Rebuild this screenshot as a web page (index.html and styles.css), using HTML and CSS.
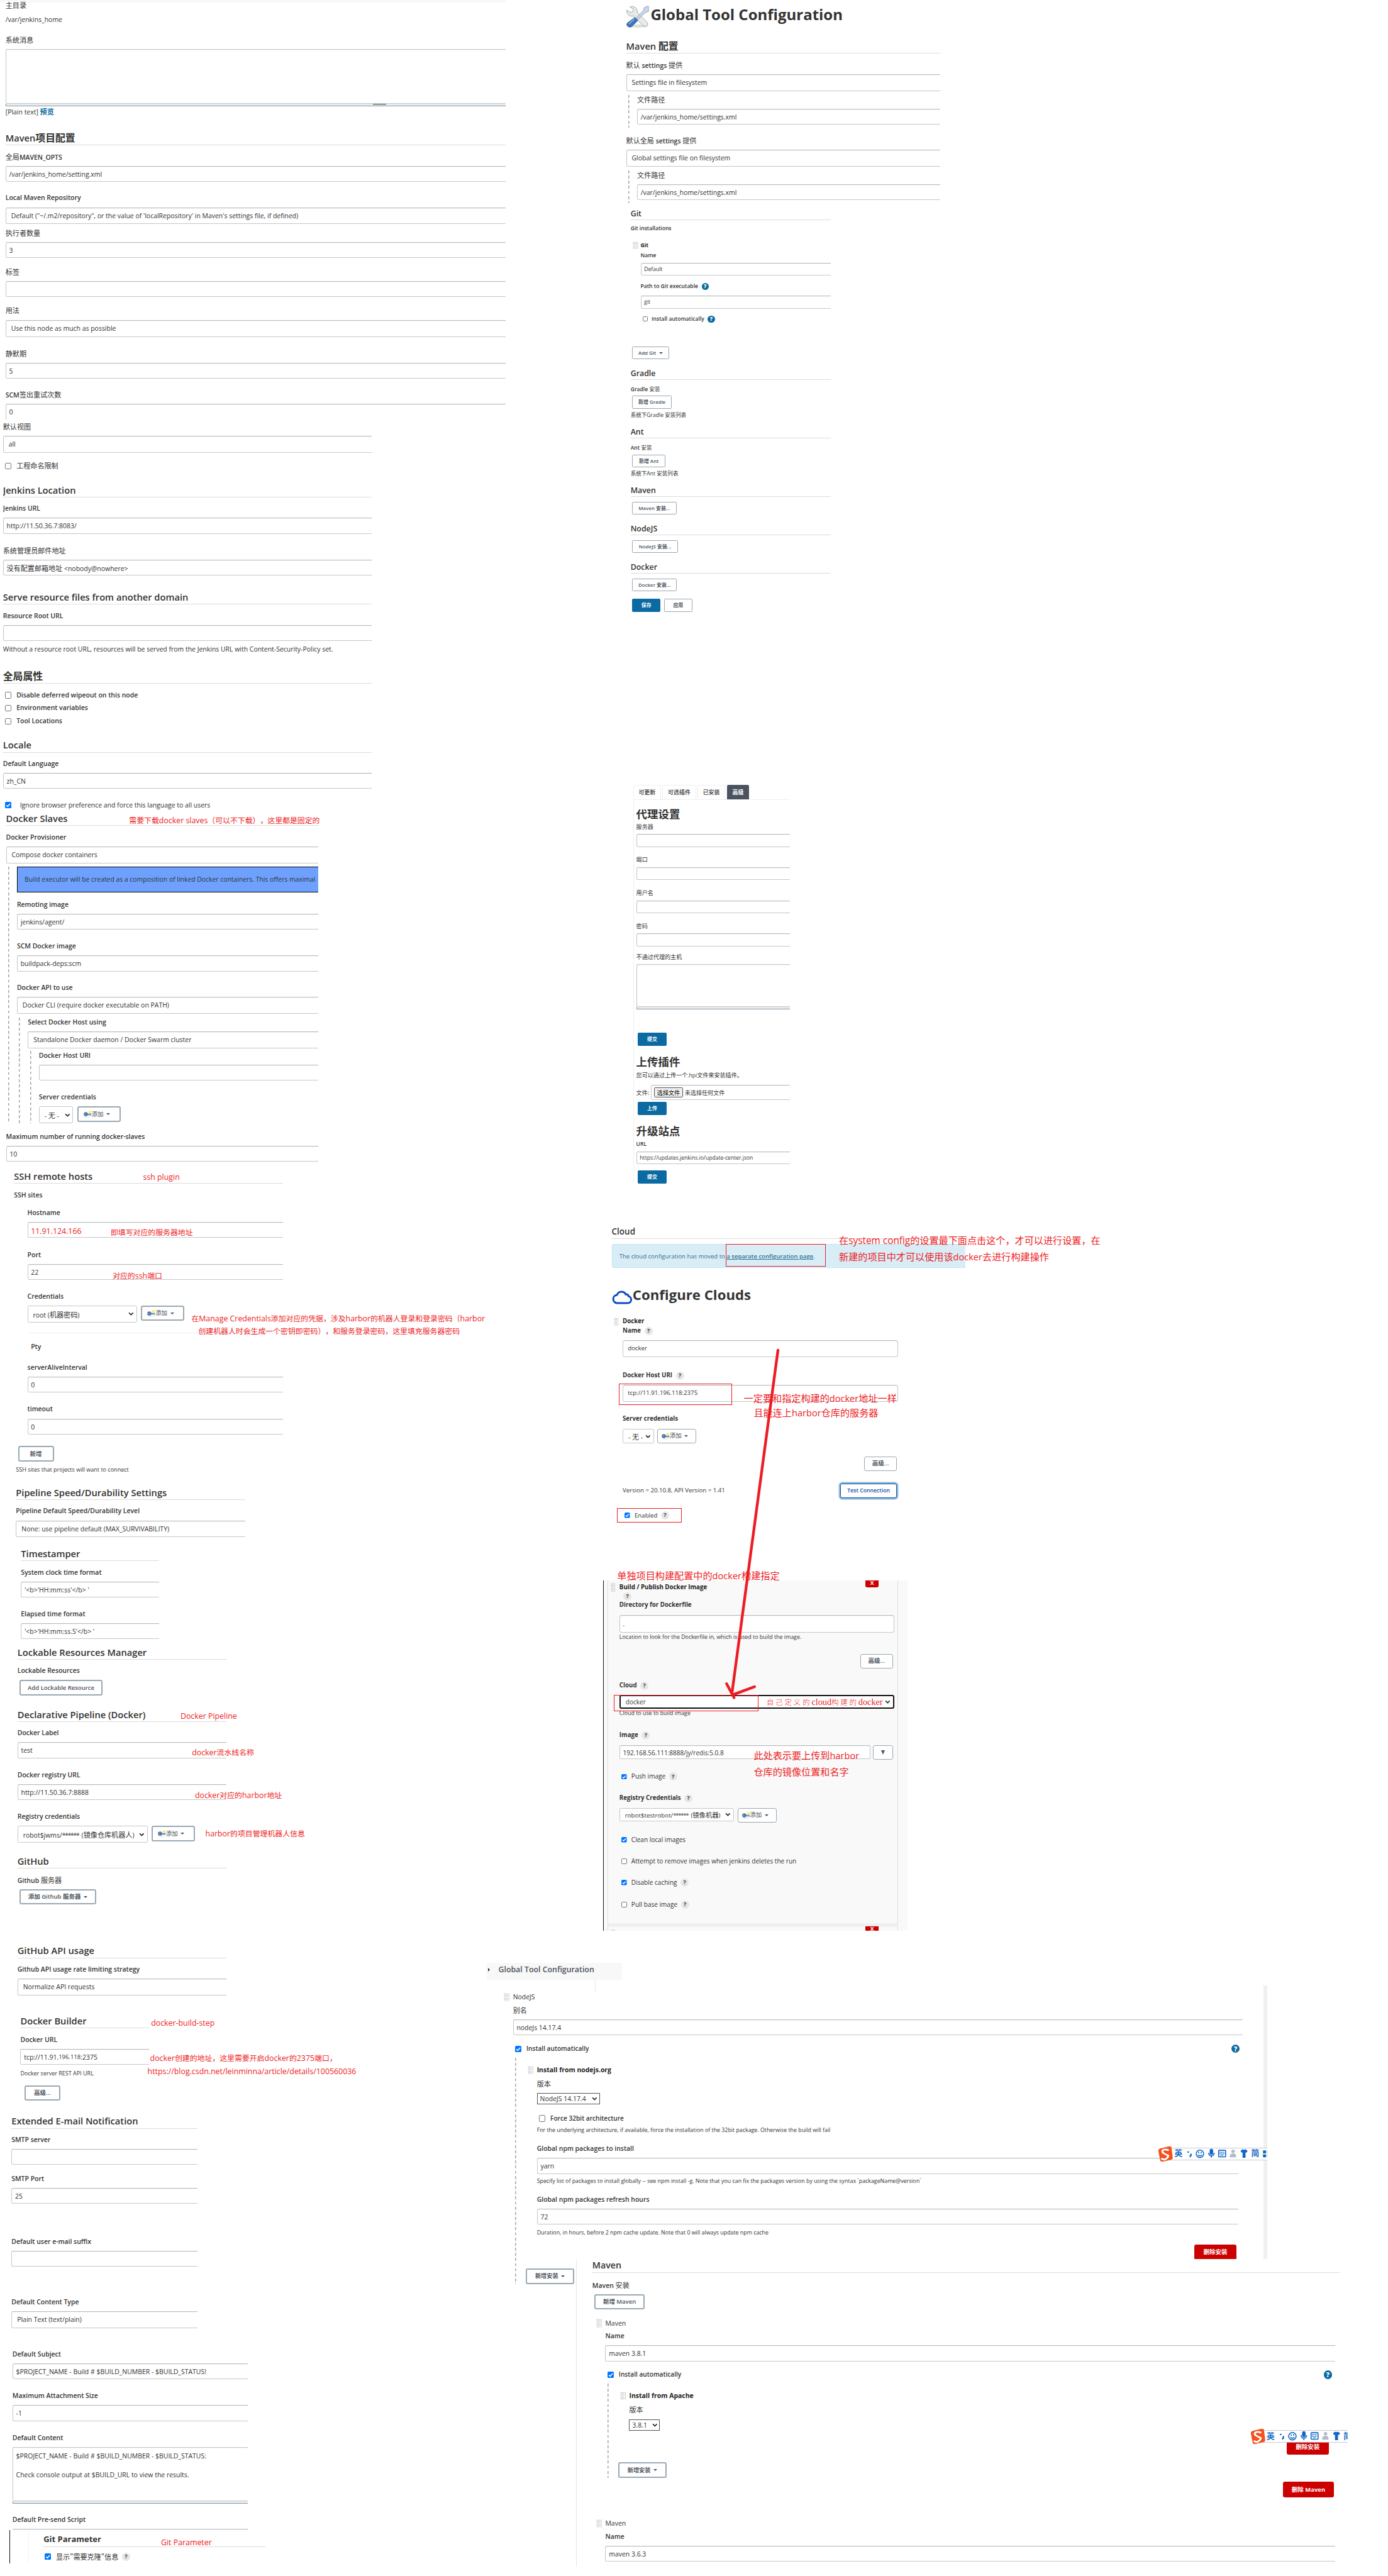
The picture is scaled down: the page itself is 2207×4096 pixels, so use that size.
FILE: index.html
```html
<!DOCTYPE html>
<html lang="zh-CN">
<head>
<meta charset="utf-8">
<title>Jenkins 配置</title>
<link rel="stylesheet" href="styles.css">
</head>
<body>
<svg class="defs" width="0" height="0">
  <symbol id="key" viewBox="0 0 16 14">
    <ellipse cx="8" cy="12.6" rx="6" ry="1" fill="#e4e4e4"/>
    <path d="M7 6.2h8.4v2.6H14l-.8 1-1-1H7z" fill="#7ba0cf" stroke="#3c6395" stroke-width=".5"/>
    <circle cx="4.3" cy="7" r="3.9" fill="#4d7ab3" stroke="#345a8c" stroke-width=".5"/>
    <circle cx="2.8" cy="7" r="1" fill="#a9c2e2"/>
    <circle cx="12.3" cy="3" r="2.7" fill="#f8ee55"/>
  </symbol>
  <symbol id="chev" viewBox="0 0 12 8"><path d="M1.5 1.5 6 6l4.5-4.5" fill="none" stroke="#222" stroke-width="2.2"/></symbol>
  <symbol id="check" viewBox="0 0 14 14"><rect width="14" height="14" rx="2" fill="#0075ff"/><path d="M3 7.3 5.8 10 11 4" fill="none" stroke="#fff" stroke-width="2"/></symbol>
  <symbol id="ime" viewBox="0 0 380 32">
    <path d="M20 5H380V28H20z" fill="#fff"/>
    <path d="M20 4.500H380M20 28.500H380" stroke="#b9bcc2"/>
    <path d="M6 5 23 1q4 0 4.500 3L30 24q0 3-4 4L9 32q-4 0-4.500-4L1 10q0-4 5-5z" fill="#f4511e"/>
    <path d="M22 9q-9-3-12 0t2 6 8 4-2 6-11 0" fill="none" stroke="#fff" stroke-width="3.600"/>
    <g fill="none" stroke="#1368c4" stroke-width="2">
      <path d="M61 11v3M66 16q2 3-2 6" stroke-width="3"/>
      <circle cx="84.500" cy="16" r="7.500"/><path d="M82 12v3M87 12v3M80.500 18q4 4 8 0"/>
      <rect x="105" y="7" width="5" height="10" rx="2.500" fill="#1368c4"/><path d="M102 14q0 6 5.500 6t5.500-6M107.500 20v4"/>
      <rect x="122" y="9" width="14" height="13" rx="1"/><path d="M124 13h10M124 16h10M126 19h6" stroke-dasharray="2 1"/>
    </g>
    <g fill="#b3bcc9"><circle cx="151" cy="11" r="3.500"/><path d="M144 23q0-8 7-8 5 0 6 4v4z"/></g>
    <path d="M166 10l4-3q3 2 6 0l4 3-2 4-2-1v11h-6V13l-2 1z" fill="#1368c4"/>
    <path d="M211 9h6v6h-6zM219 9h6v6h-6zM211 17h6v6h-6zM219 17h6v6h-6z" fill="#1368c4"/>
  </symbol>
</svg>

<main class="canvas">

<section class="panel p-system">
  <div class="lb m1 tight"><span class="z">主目录</span></div>
  <div class="tx m9">/var/jenkins_home</div>
  <div class="lb m21"><span class="z">系统消息</span></div>
  <div class="area a109"></div><div class="resize"><i></i></div>
  <div class="tx m1">[Plain text] <a class="z link">预览</a></div>
  <h2 class="m30">Maven<span class="z">项目配置</span></h2>
  <div class="lb m13"><span class="z">全局</span>MAVEN_OPTS</div>
  <div class="in">/var/jenkins_home/setting.xml</div>
  <div class="lb m23">Local Maven Repository</div>
  <div class="in se">Default ("~/.m2/repository", or the value of 'localRepository' in Maven's settings file, if defined)</div>
  <div class="lb m8"><span class="z">执行者数量</span></div>
  <div class="in">3</div>
  <div class="lb m18"><span class="z">标签</span></div>
  <div class="in"></div>
  <div class="lb m18"><span class="z">用法</span></div>
  <div class="in se">Use this node as much as possible</div>
  <div class="lb m24"><span class="z">静默期</span></div>
  <div class="in">5</div>
  <div class="lb m23">SCM<span class="z">签出重试次数</span></div>
  <div class="in">0</div>
</section>

<section class="panel p-view">
  <div class="lb m2"><span class="z">默认视图</span></div>
  <div class="in se">all</div>
  <div class="ck m17"><i class="box"></i><span class="z">工程命名限制</span></div>
  <h2 class="m25">Jenkins Location</h2>
  <div class="lb m13">Jenkins URL</div>
  <div class="in">http://11.50.36.7:8083/</div>
  <div class="lb m24"><span class="z">系统管理员邮件地址</span></div>
  <div class="in"><span class="z">没有配置邮箱地址</span>&nbsp;&lt;nobody@nowhere&gt;</div>
  <h2 class="m30">Serve resource files from another domain</h2>
  <div class="lb m13">Resource Root URL</div>
  <div class="in"></div>
  <div class="tx m8">Without a resource root URL, resources will be served from the Jenkins URL with Content-Security-Policy set.</div>
  <h2 class="m30"><span class="z">全局属性</span></h2>
  <div class="ck b m13"><i class="box"></i>Disable deferred wipeout on this node</div>
  <div class="ck b m6"><i class="box"></i>Environment variables</div>
  <div class="ck b m6"><i class="box"></i>Tool Locations</div>
  <h2 class="m25">Locale</h2>
  <div class="lb m13">Default Language</div>
  <div class="in">zh_CN</div>
  <div class="ck wide m23"><svg class="box on"><use href="#check"/></svg>Ignore browser preference and force this language to all users</div>
</section>

<section class="panel p-slaves">
  <h2 class="m1">Docker Slaves</h2>
  <div class="lb m13">Docker Provisioner</div>
  <div class="in se">Compose docker containers</div>
  <div class="nest m7">
    <div class="info">Build executor will be created as a composition of linked Docker containers. This offers maximal</div>
    <div class="lb m15">Remoting image</div>
    <div class="in">jenkins/agent/</div>
    <div class="lb m24">SCM Docker image</div>
    <div class="in">buildpack-deps:scm</div>
    <div class="lb m23">Docker API to use</div>
    <div class="in se">Docker CLI (require docker executable on PATH)</div>
    <div class="nest m7">
      <div class="lb m1">Select Docker Host using</div>
      <div class="in se">Standalone Docker daemon / Docker Swarm cluster</div>
      <div class="nest m5">
        <div class="lb m2">Docker Host URI</div>
        <div class="in"></div>
        <div class="lb m24">Server credentials</div>
        <div class="row"><div class="sel w69">- <span class="z">无</span> -<svg class="chev"><use href="#chev"/></svg></div><div class="btn add"><svg class="key"><use href="#key"/></svg><span>添加</span><i class="car"></i></div></div>
      </div>
    </div>
  </div>
  <div class="lb m17">Maximum number of running docker-slaves</div>
  <div class="in">10</div>
</section>

<section class="panel p-ssh">
  <h2 class="m6">SSH remote hosts</h2>
  <div class="lb tight m14">SSH sites</div>
  <div class="indent">
    <div class="lb m15">Hostname</div>
    <div class="in"></div>
    <div class="lb m25">Port</div>
    <div class="in">22</div>
    <div class="lb m23">Credentials</div>
    <div class="row"><div class="sel w220">root (<span class="z">机器密码</span>)<svg class="chev"><use href="#chev"/></svg></div><div class="btn add"><svg class="key"><use href="#key"/></svg><span>添加</span><i class="car"></i></div></div>
    <div class="rule m20"></div>
    <div class="lb tight pty m19">Pty</div>
    <div class="lb m21">serverAliveInterval</div>
    <div class="in">0</div>
    <div class="lb m24">timeout</div>
    <div class="in">0</div>
  </div>
  <div class="btn ml8 w72 m23">新增</div>
  <div class="tx small ml4 m6">SSH sites that projects will want to connect</div>
</section>

<section class="panel p-speed">
  <h2 class="m1">Pipeline Speed/Durability Settings</h2>
  <div class="lb m13">Pipeline Default Speed/Durability Level</div>
  <div class="in se">None: use pipeline default (MAX_SURVIVABILITY)</div>
</section>

<section class="panel p-time">
  <h2 class="m2">Timestamper</h2>
  <div class="lb m14">System clock time format</div>
  <div class="in">'&lt;b&gt;'HH:mm:ss'&lt;/b&gt; '</div>
  <div class="lb m23">Elapsed time format</div>
  <div class="in">'&lt;b&gt;'HH:mm:ss.S'&lt;/b&gt; '</div>
</section>

<section class="panel p-lock">
  <h2 class="m1">Lockable Resources Manager</h2>
  <div class="lb m13">Lockable Resources</div>
  <div class="btn ml4 w167">Add Lockable Resource</div>
  <h2 class="m25">Declarative Pipeline (Docker)</h2>
  <div class="lb m13">Docker Label</div>
  <div class="in">test</div>
  <div class="lb m24">Docker registry URL</div>
  <div class="in">http://11.50.36.7:8888</div>
  <div class="lb m24">Registry credentials</div>
  <div class="row"><div class="sel w261">robot$jwms/<span class="st">******</span> (<span class="z">镜像仓库机器人</span>)<svg class="chev"><use href="#chev"/></svg></div><div class="btn add"><svg class="key"><use href="#key"/></svg><span>添加</span><i class="car"></i></div></div>
  <h2 class="m24">GitHub</h2>
  <div class="lb m13">Github <span class="z">服务器</span></div>
  <div class="btn ml4 w154">添加 Github 服务器<i class="car"></i></div>
</section>

<section class="panel p-api">
  <h2 class="m10">GitHub API usage</h2>
  <div class="lb m13">Github API usage rate limiting strategy</div>
  <div class="in se">Normalize API requests</div>
</section>

<section class="panel p-builder">
  <h2 class="m6">Docker Builder</h2>
  <div class="lb m13">Docker URL</div>
  <div class="in">tcp://11.91.<span class="worn">196.118</span>:2375</div>
  <div class="tx small m7">Docker server REST API URL</div>
  <div class="btn ml8 w72 m14">高级...</div>
</section>

<section class="panel p-mail">
  <h2 class="m2">Extended E-mail Notification</h2>
  <div class="lb m13">SMTP server</div>
  <div class="in"></div>
  <div class="lb m18">SMTP Port</div>
  <div class="in">25</div>
  <div class="lb m66">Default user e-mail suffix</div>
  <div class="in"></div>
  <div class="lb m62">Default Content Type</div>
  <div class="in se">Plain Text (text/plain)</div>
</section>

<section class="panel p-content">
  <div class="lb m1">Default Subject</div>
  <div class="in">$PROJECT_NAME - Build # $BUILD_NUMBER - $BUILD_STATUS!</div>
  <div class="lb m24">Maximum Attachment Size</div>
  <div class="in">-1</div>
  <div class="lb m24">Default Content</div>
  <div class="area a109">$PROJECT_NAME - Build # $BUILD_NUMBER - $BUILD_STATUS:<br><br>Check console output at $BUILD_URL to view the results.</div><div class="resize"></div>
  <div class="lb m22">Default Pre-send Script</div>
  <div class="in"></div>
</section>

<section class="panel p-gitparam">
  <h2>Git Parameter</h2>
  <div class="ck m10"><svg class="box on"><use href="#check"/></svg><span class="z">显示"需要克隆"信息</span><b class="q">?</b></div>
</section>

<section class="panel p-tools">
  <h1><svg class="wrench" viewBox="0 0 46 46">
    <ellipse cx="22" cy="42" rx="21" ry="3" fill="#ddd"/>
    <path d="M7 4q6-3 11 1t4 10l19 19q4 5 0 8t-8-1L15 22Q6 24 2 17q-2-4-1-7l7 5 5-2 1-5z" fill="#e8eaea" stroke="#8e9494"/>
    <path d="M44 2l-8 3-2 6-15 16 3 3 16-15 6-2 2-8z" fill="#c9d6e4" stroke="#7a92ad"/>
    <path d="M17 25l6 6-12 12q-4 3-8 0t-1-7z" fill="#3f74bd" stroke="#22508f"/>
    <path d="M16 28 5 38" stroke="#8db4e8" stroke-width="2"/></svg>Global Tool Configuration</h1>
  <h2>Maven <span class="z">配置</span></h2>
  <div class="lb m14"><span class="z">默认</span> settings <span class="z">提供</span></div>
  <div class="in se">Settings file in filesystem</div>
  <div class="nest pb6 m7">
    <div class="lb m1"><span class="z">文件路径</span></div>
    <div class="in">/var/jenkins_home/settings.xml</div>
  </div>
  <div class="lb m17"><span class="z">默认全局</span> settings <span class="z">提供</span></div>
  <div class="in se">Global settings file on filesystem</div>
  <div class="nest pb6 m7">
    <div class="lb m1"><span class="z">文件路径</span></div>
    <div class="in">/var/jenkins_home/settings.xml</div>
  </div>
</section>

<section class="panel mini p-git">
  <h2 class="m2">Git</h2>
  <div class="lb m9">Git installations</div>
  <div class="indent">
    <div class="lb grip dark m18">Git</div>
    <div class="lb m5">Name</div>
    <div class="in m6">Default</div>
    <div class="lb m14">Path to Git executable<b class="hp">?</b></div>
    <div class="in m10">git</div>
    <div class="ck b m13"><i class="box"></i>Install automatically<b class="hp">?</b></div>
  </div>
  <div class="btn w74 m47">Add Git<i class="car"></i></div>
  <h2 class="m17">Gradle</h2>
  <div class="lb m10">Gradle <span class="z">安装</span></div>
  <div class="btn w80 m6">新增 Gradle</div>
  <div class="tx m4"><span class="z">系统下</span>Gradle <span class="z">安装列表</span></div>
  <h2 class="m16">Ant</h2>
  <div class="lb m10">Ant <span class="z">安装</span></div>
  <div class="btn w67 m6">新增 Ant</div>
  <div class="tx m4"><span class="z">系统下</span>Ant <span class="z">安装列表</span></div>
  <h2 class="m15">Maven</h2>
  <div class="btn w89 m10">Maven 安装...</div>
  <h2 class="m17">NodeJS</h2>
  <div class="btn w92 m10">NodeJS 安装...</div>
  <h2 class="m17">Docker</h2>
  <div class="btn w90 m10">Docker 安装...</div>
  <div class="row m15"><div class="btn blue w57">保存</div><div class="btn w57">应用</div></div>
</section>

<section class="panel mini p-plugins">
  <nav class="tabs"><span class="w56">可更新</span><span class="w67">可选插件</span><span class="w56">已安装</span><span class="w45 on">高级</span></nav>
  <div class="tabbody">
    <h3 class="m13">代理设置</h3>
    <div class="lb m2"><span class="z">服务器</span></div>
    <div class="in m7"></div>
    <div class="lb m17"><span class="z">端口</span></div>
    <div class="in m7"></div>
    <div class="lb m18"><span class="z">用户名</span></div>
    <div class="in m7"></div>
    <div class="lb m17"><span class="z">密码</span></div>
    <div class="in m7"></div>
    <div class="lb m13"><span class="z">不通过代理的主机</span></div>
    <div class="area a86 m7"></div><div class="resize"></div>
    <div class="btn blue w58 m47">提交</div>
    <h3 class="m18">上传插件</h3>
    <div class="tx m2"><span class="z">您可以通过上传一个</span>.hpi<span class="z">文件来安装插件。</span></div>
    <div class="file m12"><span class="z">文件:</span><div class="in"><button>选择文件</button><span class="z">未选择任何文件</span></div></div>
    <div class="btn blue w58 m4">上传</div>
    <h3 class="m18">升级站点</h3>
    <div class="lb m2">URL</div>
    <div class="in m7">https://updates.jenkins.io/update-center.json</div>
    <div class="btn blue w58 m12">提交</div>
  </div>
</section>

<section class="panel p-cloud">
  <h2>Cloud</h2>
  <div class="alert">The cloud configuration has moved to <a>a separate configuration page</a>.</div>
</section>

<section class="panel p-clouds">
  <h1><svg class="cloud" viewBox="0 0 43 29"><path d="M11 26.500H33a7 7 0 0 0 1.500-13.800A5 5 0 0 0 29 9 9.500 9.500 0 0 0 11.500 10 8.300 8.300 0 0 0 11 26.500z" fill="none" stroke="#0b4fc0" stroke-width="3.800"/></svg>Configure Clouds</h1>
  <div class="form">
    <div class="lb grip dark m27">Docker</div>
    <div class="lb">Name<b class="q">?</b></div>
    <div class="in full">docker</div>
    <div class="lb m27">Docker Host URI<b class="q">?</b></div>
    <div class="in full">tcp://11.91.196.118:2375</div>
    <div class="lb m26">Server credentials</div>
    <div class="row"><div class="sel w63">- <span class="z">无</span> -<svg class="chev"><use href="#chev"/></svg></div><div class="btn add"><svg class="key"><use href="#key"/></svg><span>添加</span><i class="car"></i></div></div>
    <div class="right m26"><div class="btn w65">高级...</div></div>
    <div class="right m25"><span>Version = 20.10.8, API Version = 1.41</span><div class="btn focus w113">Test Connection</div></div>
    <div class="ck m26"><svg class="box on"><use href="#check"/></svg>Enabled<b class="q">?</b></div>
  </div>
</section>

<section class="panel p-build">
  <div class="chunk">
    <b class="x">X</b>
    <div class="lb grip dark">Build / Publish Docker Image</div>
    <div class="lb qline"><b class="q">?</b></div>
    <div class="lb">Directory for Dockerfile</div>
    <div class="in full tall m11">.</div>
    <div class="tx small">Location to look for the Dockerfile in, which is used to build the image.</div>
    <div class="right m23"><div class="btn w65">高级...</div></div>
    <div class="lb m25">Cloud<b class="q">?</b></div>
    <div class="sel black m10">docker<svg class="chev"><use href="#chev"/></svg></div>
    <div class="tx small">Cloud to use to build image</div>
    <div class="lb m24">Image<b class="q">?</b></div>
    <div class="row m11"><div class="in full w503">192.168.56.111:8888/jy/redis:5.0.8</div><div class="btn w41"><i class="car big"></i></div></div>
    <div class="ck m25"><svg class="box on"><use href="#check"/></svg>Push image<b class="q">?</b></div>
    <div class="lb m25">Registry Credentials<b class="q">?</b></div>
    <div class="row m11"><div class="sel w230">robot$testrobot/<span class="st">******</span> (<span class="z">镜像机器</span>)<svg class="chev"><use href="#chev"/></svg></div><div class="btn add"><svg class="key"><use href="#key"/></svg><span>添加</span><i class="car"></i></div></div>
    <div class="ck m26"><svg class="box on"><use href="#check"/></svg>Clean local images</div>
    <div class="ck m25"><i class="box"></i>Attempt to remove images when jenkins deletes the run</div>
    <div class="ck m25"><svg class="box on"><use href="#check"/></svg>Disable caching<b class="q">?</b></div>
    <div class="ck m26"><i class="box"></i>Pull base image<b class="q">?</b></div>
  </div>
  <div class="chunk next"><b class="x">X</b><div class="lb grip"></div></div>
</section>

<section class="panel p-nav"><i></i>Global Tool Configuration</section>
<div class="vline v1"></div>

<section class="panel p-node">
  <div class="form">
    <div class="tx grip m12">NodeJS</div>
    <div class="lb m6"><span class="z">别名</span></div>
    <div class="in">nodeJs 14.17.4</div>
    <div class="ck b m17"><svg class="box on"><use href="#check"/></svg>Install automatically<b class="hp end">?</b></div>
    <div class="nest m8">
      <div class="lb grip dark m15">Install from nodejs.org</div>
      <div class="lb m7"><span class="z">版本</span></div>
      <div class="sel native w126">NodeJS 14.17.4<svg class="chev"><use href="#chev"/></svg></div>
      <div class="ck b m18"><i class="box"></i>Force 32bit architecture</div>
      <div class="tx small m5">For the underlying architecture, if available, force the installation of the 32bit package. Otherwise the build will fail</div>
      <div class="lb m16">Global npm packages to install</div>
      <div class="in">yarn</div>
      <div class="tx small m6">Specify list of packages to install globally -- see npm install -g. Note that you can fix the packages version by using the syntax `packageName@version`</div>
      <div class="lb m16">Global npm packages refresh hours</div>
      <div class="in">72</div>
      <div class="tx small m7">Duration, in hours, before 2 npm cache update. Note that 0 will always update npm cache</div>
      <div class="right m13"><div class="btn red w84">删除安装</div></div>
      <div class="btn more w97 m17">新增安装<i class="car"></i></div>
    </div>
  </div>
</section>
<div class="scroll"></div>

<section class="panel p-maven">
  <h2>Maven</h2>
  <div class="lb tight m14">Maven <span class="z">安装</span></div>
  <div class="btn ml4 w101 m8">新增 Maven</div>
  <div class="form">
    <div class="tx grip m18">Maven</div>
    <div class="lb m6">Name</div>
    <div class="in">maven 3.8.1</div>
    <div class="ck b m17"><svg class="box on"><use href="#check"/></svg>Install automatically<b class="hp end">?</b></div>
    <div class="nest m8">
      <div class="lb grip dark m15">Install from Apache</div>
      <div class="lb m6"><span class="z">版本</span></div>
      <div class="sel native w61">3.8.1<svg class="chev"><use href="#chev"/></svg></div>
      <div class="right m17"><div class="btn red w84">删除安装</div></div>
      <div class="btn more w97 m16">新增安装<i class="car"></i></div>
    </div>
    <div class="right last m8"><div class="btn red w101">删除 Maven</div></div>
    <div class="tx grip m43">Maven</div>
    <div class="lb m6">Name</div>
    <div class="in">maven 3.6.3</div>
  </div>
</section>

<div class="ime i1"><svg viewBox="0 0 219 32"><use href="#ime" width="380" height="32"/></svg><b class="en">英</b><b class="jian">简</b></div>
<div class="ime i2"><svg viewBox="0 0 195 32"><use href="#ime" width="380" height="32"/></svg><b class="en">英</b><b class="jian">简</b></div>

<p class="note n1"><span class="z">需要下载</span>docker slaves<span class="z">（可以不下载），这里都是固定的</span></p>
<p class="note n2">ssh plugin</p>
<p class="note n3">11.91.124.166</p>
<p class="note n4"><span class="z">即填写对应的服务器地址</span></p>
<p class="note n5"><span class="z">对应的</span>ssh<span class="z">端口</span></p>
<p class="note n6"><span class="z">在</span>Manage Credentials<span class="z">添加对应的凭据，涉及</span>harbor<span class="z">的机器人登录和登录密码（</span>harbor</p>
<p class="note n7"><span class="z">创建机器人时会生成一个密钥即密码），和服务登录密码，这里填充服务器密码</span></p>
<p class="note n8">Docker Pipeline</p>
<p class="note n9">docker<span class="z">流水线名称</span></p>
<p class="note n10">docker<span class="z">对应的</span>harbor<span class="z">地址</span></p>
<p class="note n11">harbor<span class="z">的项目管理机器人信息</span></p>
<p class="note n12">docker-build-step</p>
<p class="note n13">docker<span class="z">创建的地址，这里需要开启</span>docker<span class="z">的</span>2375<span class="z">端口，</span></p>
<p class="note n14">https://blog.csdn.net/leinminna/article/details/100560036</p>
<p class="note n15">Git Parameter</p>
<p class="note big n16"><span class="z">在</span>system config<span class="z">的设置最下面点击这个，才可以进行设置，在</span></p>
<p class="note big n17"><span class="z">新建的项目中才可以使用该</span>docker<span class="z">去进行构建操作</span></p>
<p class="note big n18"><span class="z">一定要和指定构建的</span>docker<span class="z">地址一样</span></p>
<p class="note big n19"><span class="z">且能连上</span>harbor<span class="z">仓库的服务器</span></p>
<p class="note big n20"><span class="z">单独项目构建配置中的</span>docker<span class="z">构建指定</span></p>
<p class="note serif n21"><span>自己定义的</span>cloud<span>构建的</span>docker</p>
<p class="note big n22"><span class="z">此处表示要上传到</span>harbor</p>
<p class="note big n23"><span class="z">仓库的镜像位置和名字</span></p>
<div class="frame f1"></div><div class="frame f2"></div><div class="frame f3"></div><div class="frame f4"></div>
<svg class="arrow" viewBox="0 0 120 710"><path d="M111 5 19 691M8 674 23 702M64 680 21 696" fill="none" stroke="#ed1c24" stroke-width="5.500" stroke-linecap="round"/></svg>
</main>
</body>
</html>
```
FILE: styles.css
```css
*{box-sizing:border-box}
html,body{margin:0;padding:0;background:#fff;overflow:hidden}
.defs{position:absolute}
.canvas{position:relative;width:2784px;height:5168px;zoom:.79265;overflow:hidden;background:#fff;
  font:13.2px/20px "Open Sans","Noto Sans CJK SC",sans-serif;color:#333;text-spacing-trim:space-all}
.z{font-size:1.061em;font-family:"Noto Sans CJK SC",sans-serif}

/* pasted configuration snippets on the board */
.panel{position:absolute;overflow:hidden;white-space:nowrap}
.p-system{left:0;top:0;width:1014px;height:841px;padding-left:11px;background:linear-gradient(#f8f8f8 0 5px,#fff 5px)}
.p-view{left:6px;top:844px;width:740px;height:783px}
.p-slaves{left:12px;top:1628px;width:626px;height:709px}
.p-ssh{left:28px;top:2340px;width:540px;height:622px}
.p-speed{left:32px;top:2980px;width:460px;height:106px}
.p-time{left:42px;top:3101px;width:277px;height:190px}
.p-lock{left:35px;top:3300px;width:419px;height:523px}
.p-api{left:35px;top:3890px;width:419px;height:115px}
.p-builder{left:41px;top:4035px;width:258px;height:182px}
.p-mail{left:23px;top:4240px;width:373px;height:433px}
.p-content{left:25px;top:4712px;width:472px;height:363px}
.p-gitparam{left:19px;top:5075px;width:514px;height:67px;padding:6px 0 0 67px;border-left:1px solid #111;background:linear-gradient(90deg,transparent 36px,#f3f3f3 36px 38px,#fff 38px)}
.p-tools{left:1256px;top:0;width:630px;height:412px}
.p-git{left:1265px;top:415px;width:401px;height:815px}
.p-plugins{left:1270px;top:1575px;width:314px;height:802px}
.p-cloud{left:1227px;top:2457px;width:710px;height:87px}
.p-clouds{left:1226px;top:2580px;width:580px;height:475px}
.p-build{left:1210px;top:3170px;width:610px;height:703px;background:#f9f9f9;border-left:1px solid #111;padding-left:8px}
.p-nav{left:976px;top:3938px;width:272px;height:33px;background:#f8f8f8;padding-left:3px;font-weight:600;font-size:15.6px;line-height:29px;color:#4d545d;display:flex;gap:17px}
.p-nav i{border:4px solid transparent;border-left-color:#333;border-right:0;height:0;margin-top:9px}
.p-node{left:1005px;top:3985px;width:1488px;height:597px}
.p-maven{left:1155px;top:4532px;width:1532px;height:617px;border-left:1px solid #e6e6e6;background:#fff;padding-left:32px}

/* spacing steps */
.m1{margin-top:1px}.m2{margin-top:2px}.m4{margin-top:4px}.m5{margin-top:5px}.m6{margin-top:6px}.m7{margin-top:7px}
.m8{margin-top:8px}.m9{margin-top:9px}.m10{margin-top:10px}.m11{margin-top:11px}.m12{margin-top:12px}.m13{margin-top:13px}
.m14{margin-top:14px}.m15{margin-top:15px}.m16{margin-top:16px}.m17{margin-top:17px}.m18{margin-top:18px}.m19{margin-top:19px}
.m20{margin-top:20px}.m21{margin-top:21px}.m22{margin-top:22px}.m23{margin-top:23px}.m24{margin-top:24px}.m25{margin-top:25px}
.m26{margin-top:26px}.m27{margin-top:27px}.m30{margin-top:30px}.m43{margin-top:43px}.m47{margin-top:47px}.m62{margin-top:62px}.m66{margin-top:66px}
.ml4{margin-left:4px}.ml8{margin-left:8px}.pb6{padding-bottom:6px}
.w41{width:41px}.w45{width:45px}.w56{width:56px}.w57{width:57px}.w58{width:58px}.w61{width:61px}.w63{width:63px}.w65{width:65px}
.w67{width:67px}.w69{width:69px}.w72{width:72px}.w74{width:74px}.w80{width:80px}.w84{width:84px}.w89{width:89px}.w90{width:90px}
.w92{width:92px}.w97{width:97px}.w101{width:101px}.w113{width:113px}.w126{width:126px}.w154{width:154px}.w167{width:167px}
.w220{width:220px}.w230{width:230px}.w261{width:261px}.w503{width:503px}

h1,h2,h3,p{margin:0}
h2{height:28px;border-bottom:1px solid #dcdcdc;font-size:18.5px;line-height:26px;font-weight:600}
h2.m1{margin-top:1px}h2.m2{margin-top:2px}h2.m6{margin-top:6px}h2.m10{margin-top:10px}h2.m15{margin-top:15px}h2.m16{margin-top:16px}
h2.m17{margin-top:17px}h2.m24{margin-top:24px}h2.m25{margin-top:25px}h2.m30{margin-top:30px}
h3.m13{margin-top:13px}h3.m18{margin-top:18px}
h2 .z{font-weight:700;font-size:1.08em}
h1{display:flex;align-items:center;font-size:27px;font-weight:700}

.lb{height:20px;margin-bottom:8px;font-weight:600}
.lb .z{font-weight:400}
.lb.tight{margin-bottom:0}
.tx{height:20px}
.tx.small{font-size:11.4px}
.link{color:#0b6aa2;font-weight:700}
.in{height:32px;border:1px solid #c4c7ca;border-right:0;border-top-color:#b8bcbf;border-radius:3px 0 0 3px;padding:0 6px;line-height:31px;
  box-shadow:inset 0 1px 1px rgba(0,0,0,.07);background:#fff;overflow:hidden}
.in.se{height:34px;padding-left:10px;line-height:32px}
.in.full{border-right:1px solid #c4c7ca;border-radius:5px}
.area{border:1px solid #c4c7ca;border-right:0;border-radius:3px 0 0 3px;padding:7px 6px;line-height:19px;box-shadow:inset 0 1px 1px rgba(0,0,0,.07)}
.a109{height:109px}.a86{height:86px}
.resize{height:5px;background:#e6ecef;border-bottom:1px solid #8d9aa5;border-left:1px solid #8d9aa5}
.resize i{display:block;width:27px;height:3px;margin-left:736px;border:solid #8d9a95;border-width:1px 0}
.rule{height:1px;background:#eee;margin-left:4px}
.pty{margin-left:7px}
.indent{padding-left:27px}
.ck{display:flex;height:20px;align-items:center;padding-left:4px}
.ck.b{font-weight:600}
.box{width:13px;height:13px;border:1px solid #767676;border-radius:2px;background:#fff;margin-right:10px;flex:none}
.box.on{border:0}
.ck.wide .box{margin-right:17px}
.nest{margin-left:4px;padding-left:18px;background:repeating-linear-gradient(#aaa 0 6px,transparent 6px 10.3px) 0 0/2px 100% no-repeat}
.info{height:51px;background:#6ea1fe;border:1.3px solid #000;border-right:0;padding-left:14px;line-height:50px;font-size:13.1px}
.row{display:flex;gap:8px}
.sel{position:relative;height:34px;border:1px solid #c4c7ca;border-radius:3px;padding-left:10px;line-height:34px;background:#fff}
.st{letter-spacing:-1.7px;margin-right:2px}
.chev{position:absolute;right:5px;top:50%;margin-top:-4px;width:11px;height:8px}
.btn{height:31px;border:2.6px solid #9aa8b2;border-radius:4px;display:flex;align-items:center;justify-content:center;
  font-size:12px;font-weight:600;color:#4d545d;background:#fff}
.btn.add{width:87px;padding-right:8px;font-weight:400}
.key{width:16px;height:14px}
.car{border:4px solid transparent;border-top-color:#4d545d;border-bottom:0;margin-left:6px}
.car.big{border-width:9px 5px 0;margin:0}
.q{display:inline-flex;width:16.500px;height:16.500px;border-radius:50%;background:#e6e6e6;font-size:11.5px;line-height:16px;font-weight:700;align-items:center;justify-content:center;margin-left:7px}
.hp{display:inline-flex;width:14px;height:14px;border-radius:50%;background:#0b6aa2;color:#fff;font-size:11px;line-height:1;align-items:center;justify-content:center;margin-left:7px}
.grip{position:relative;overflow:visible}
.grip::before{content:"";position:absolute;left:-18px;top:1px;width:11px;height:17px;background:radial-gradient(circle,#aaa .8px,transparent 1.1px) 0 0/3px 3px}
.dark{color:#222;font-weight:700}
.right{display:flex;justify-content:flex-end;align-items:center}
.vline{position:absolute;width:1px;background:#e8e8e8}
.v1{left:1194px;top:3971px;height:23px}
.scroll{position:absolute;left:2534px;top:3983px;width:8px;height:549px;background:#f0f0f0}
.worn{display:inline-block;height:9px;line-height:9px;overflow:hidden;font-size:12px;vertical-align:1px}

.p-gitparam h2{font-size:16.4px;font-weight:700}
.p-gitparam .ck{padding-left:2px}
.p-tools h1{height:58px;margin-bottom:21px;font-size:30.300px}
.wrench{width:46px;height:46px;margin:8px 3px 0 0}

/* reduced-size snippets */
.mini{font-size:10.8px;line-height:16px}
.mini h2{height:24px;font-size:15.6px;line-height:23px}
.mini .lb,.mini .tx,.mini .ck{height:16px;margin-bottom:0}
.mini .in{height:26px;line-height:24px}
.mini .btn{height:26px;border-width:1px;border-radius:2px;font-size:10px;margin-left:3px}
.mini .indent{padding-left:20px}
.mini .box{width:10px;height:10px;margin-right:8px}
.mini .btn.blue{background:#0b6aa2;border-color:#0b6aa2;color:#fff;font-weight:700}
.mini .grip::before{left:-16px;top:0;height:16px}
.mini h3{height:30px;line-height:29px;font-size:22px;font-weight:700}
.mini .row{gap:4px}
.p-plugins .btn{margin-left:3px}
.p-git .z{font-size:1em}
.tabs{display:flex;gap:3px;height:29px;font-size:11.3px}
.tabs span{border:1px solid #eaeff2;border-bottom:0;border-radius:3px 3px 0 0;text-align:center;line-height:28px;font-weight:500}
.tabs .on{background:#4b545e;color:#fff;font-weight:700;border-color:#4b545e}
.tabbody{border:2px solid #eaeff0;border-width:1px 0 0 2px;padding-left:5px;display:flow-root;height:773px}
.file{display:flex;align-items:center;gap:3px}
.mini .file .in{flex:1;height:31px;display:flex;align-items:center;gap:4px}
.file button{width:57px;height:20px;padding:0;border:1px solid #555;border-radius:2px;background:#efefef;font:11.5px/16px "Noto Sans CJK SC",sans-serif}

.p-cloud h2{font-size:17px}
.alert{margin-top:11px;height:47px;background:#d9edf7;border:1px solid #bce8f1;border-right:0;border-radius:4px 0 0 4px;padding-left:14px;line-height:47px;color:#31708f;font-size:12.05px}
.alert a{font-weight:600;text-decoration:underline}
.p-clouds h1{height:35px;font-size:28px;line-height:35px}
.cloud{width:43px;height:29px;margin-top:8px}
.p-clouds .form{padding-left:23px;width:576px}
.p-clouds .lb,.p-build .lb{height:18px;line-height:18px;margin-bottom:11px;font-weight:700;font-size:12.3px}
.p-clouds .lb.grip{margin-bottom:1px}
.p-clouds .in,.p-clouds .right span,.p-clouds .ck{font-size:12.2px}
.p-clouds .in{height:34px;padding-left:9px}
.p-clouds .lb+.in{margin-top:-1px}
.p-clouds .sel,.p-clouds .btn,.p-build .btn{height:29px;line-height:29px;border-width:1px}
.p-clouds .btn.add{width:78px}
.p-clouds .row{gap:7px}
.p-clouds .right{padding-right:3px}
.p-clouds .right span{margin-right:auto}
.p-clouds .btn.focus{border:1.500px solid #0b4fb0;color:#0b4fa8;box-shadow:0 0 0 3px #8db9d3;font-size:11px}
.p-clouds .ck .box,.p-build .ck .box{width:11px;height:11px;margin-right:9px}
.p-clouds .ck{height:18px}

.chunk{position:relative;width:582px;height:691px;border:1px solid #dedede;border-top:0;padding:5px 6px 0 22px}
.chunk.next{height:12px;margin-top:2px;border-top:1px solid #dedede}
.x{position:absolute;right:37px;top:0;width:27px;height:14px;background:#c00;color:#fff;font-size:11px;line-height:12px;text-align:center;border-radius:0 0 3px 3px}
.p-build{font-size:12.7px}
.p-build .lb{margin-bottom:0}
.p-build .qline{margin-left:1px}
.p-build .tall{height:35px}
.p-build .in{margin-bottom:0;line-height:33px}
.p-build .row .in{height:28px;line-height:28px;border-radius:3px}
.p-build .sel{height:28px;line-height:27px}
.p-build .w230{font-size:12.3px;height:27px;line-height:26px}
.p-build .sel.black{border:2.6px solid #111;border-radius:4px;line-height:24px}
.p-build .row{gap:5px}
.p-build .row .add{margin-left:2px;width:79px}
.p-build .right{padding-right:3px}
.p-build .ck{height:18px}
.p-build .tx.small{font-size:11.2px}

.p-node .form,.p-maven .form{padding-left:24px}
.p-maven .form{padding-left:26px;width:1490px}
.p-node .ck,.p-maven .ck{font-size:12.8px}
.end{margin-left:auto;margin-right:6px}
.hp.end{width:17px;height:17px;font-size:13px}
.p-node .nest,.p-maven .nest{padding-left:44px;padding-right:9px;margin-left:4px;display:flow-root}
.native{height:23px;line-height:21px;border:1px solid #555;border-radius:0;padding-left:5px}
.native .chev{right:3px}
.btn.red{background:#c00;border-color:#c00;color:#fff;font-weight:700}
.more{margin-left:-22px;font-size:11.6px}
.p-node .tx.small,.p-maven .tx.small{font-size:11.15px}
.p-node .right,.p-maven .nest .right{padding-right:4px}
.p-maven h2{font-size:18px}
.p-maven .last{padding-right:3px}

.ime{position:absolute;height:32px;overflow:hidden;color:#1368c4}
.ime svg{display:block;height:32px;width:100%}
.ime b{position:absolute;top:6px;font-size:16px;line-height:20px;font-weight:700}
.i1{left:2323px;top:4304px;width:219px}
.i2{left:2508px;top:4871px;width:195px}
.en{left:33px}.jian{left:187px}

/* handwritten remarks */
.note{position:absolute;white-space:nowrap;color:#ed1c24;font-size:15.6px;line-height:20px}
.note .z{font-size:15px}
.note.big{font-size:18.4px}
.note.big .z{font-size:19.1px}
.note.n16{font-size:19.4px}
.note.serif{font-family:"Liberation Serif","Noto Sans CJK SC",serif;font-size:18px}
.serif span{font-size:14.500px;letter-spacing:3.500px;font-weight:300}
.n1{left:259px;top:1635px}.n2{left:287px;top:2351px}.n3{left:62px;top:2460px}.n4{left:222px;top:2461px}
.n5{left:226px;top:2549px}.n6{left:384px;top:2634px}.n7{left:398px;top:2660px}.n8{left:362px;top:3433px}
.n9{left:385px;top:3505px}.n10{left:391px;top:3591px}.n11{left:412px;top:3667px}.n12{left:303px;top:4048px}
.n13{left:301px;top:4118px}.n14{left:296px;top:4146px}.n15{left:323px;top:5090px}
.n16{left:1683px;top:2478px}.n17{left:1683px;top:2511px}.n18{left:1492px;top:2795px}.n19{left:1512px;top:2823px}
.n20{left:1238px;top:3150px}.n21{left:1538px;top:3405px}.n22{left:1512px;top:3511px}.n23{left:1512px;top:3544px}
.frame{position:absolute;border:1.3px solid #ed1c24}
.f1{left:1456px;top:2496px;width:200px;height:45px}
.f2{left:1242px;top:2776px;width:227px;height:42px}
.f3{left:1237px;top:3025px;width:131px;height:29px}
.f4{left:1231px;top:3400px;width:290px;height:33px}
.arrow{position:absolute;left:1450px;top:2704px;width:120px;height:710px}
```
